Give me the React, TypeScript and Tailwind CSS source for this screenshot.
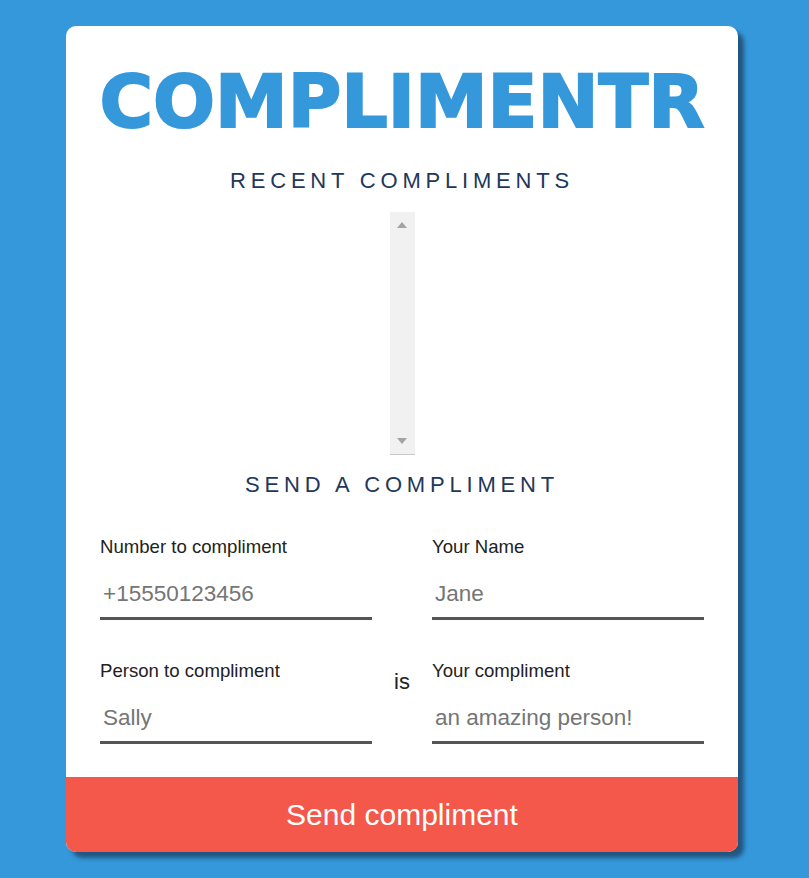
import React from 'react';

const Field: React.FC<{ label: string; placeholder: string }> = ({ label, placeholder }) => (
  <div className="flex flex-col">
    <label className="text-[18.6px] leading-[18px] text-[#222222]">{label}</label>
    <input
      placeholder={placeholder}
      className="mt-[14px] h-[50px] w-full border-b-[3px] border-[#555555] bg-transparent px-[3px] text-[22.5px] text-[#333] outline-none placeholder:text-[#757575]"
    />
  </div>
);

const App: React.FC = () => {
  return (
    <div className="min-h-[878px] w-full bg-[#3598db] pl-[66px] pt-[26px] font-['Liberation_Sans',Arial,sans-serif]">
      <div className="w-[672px] overflow-hidden rounded-[10px] bg-white shadow-[6px_6px_4px_rgba(25,50,80,0.65)]">
        {/* Header */}
        <div className="pt-[39px] text-center">
          <h1 className="font-['DejaVu_Sans',sans-serif] text-[73px] font-bold leading-none text-[#3598db] [-webkit-text-stroke:2px_#3598db]">
            COMPLIMENTR
          </h1>
        </div>

        {/* Recent compliments */}
        <h2 className="mt-[32px] text-center text-[22px] leading-[22px] tracking-[4.8px] text-[#22375a]">
          RECENT COMPLIMENTS
        </h2>
        <div className="mx-auto mt-[20px] flex h-[243px] w-[25px] flex-col items-center justify-between border-b border-[#c8c8c8] bg-[#f1f1f1] py-[10px]">
          <div className="h-0 w-0 border-x-[5.5px] border-b-[6px] border-x-transparent border-b-[#a3a3a3]" />
          <div className="h-0 w-0 border-x-[5.5px] border-t-[6px] border-x-transparent border-t-[#a3a3a3]" />
        </div>

        {/* Send a compliment */}
        <h2 className="mt-[19px] text-center text-[22px] leading-[22px] tracking-[4.8px] text-[#22375a]">
          SEND A COMPLIMENT
        </h2>

        <form className="mt-[42px] px-[34px]">
          <div className="grid grid-cols-[1fr_60px_1fr] gap-y-[42px]">
            <Field label="Number to compliment" placeholder="+15550123456" />
            <div />
            <Field label="Your Name" placeholder="Jane" />
            <Field label="Person to compliment" placeholder="Sally" />
            <div className="pt-[3px] text-center text-[22px] text-[#222222]">is</div>
            <Field label="Your compliment" placeholder="an amazing person!" />
          </div>
        </form>

        <button
          type="button"
          className="mt-[33px] h-[75px] w-full bg-[#f3584a] text-[30px] text-white"
        >
          Send compliment
        </button>
      </div>
    </div>
  );
};

export default App;
